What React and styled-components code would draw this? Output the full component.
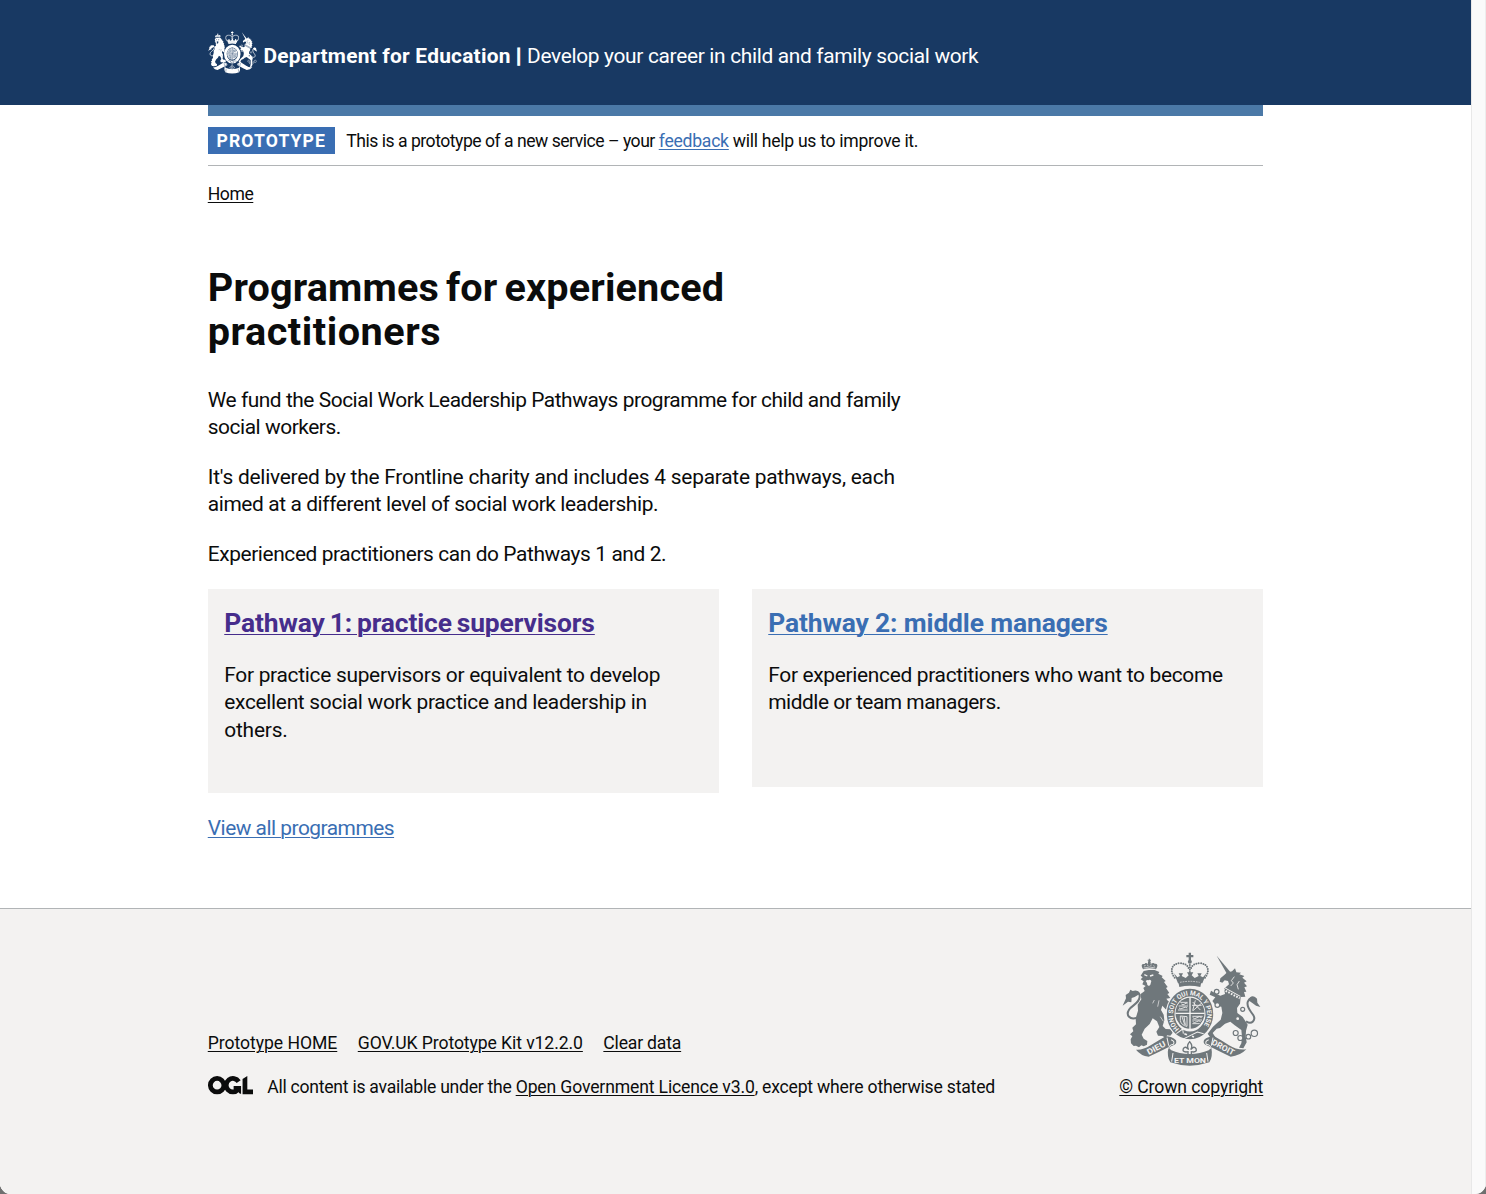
import React from "react";
import styled, { createGlobalStyle } from "styled-components";

const GlobalStyle = createGlobalStyle`
  * { box-sizing: border-box; }
  body {
    margin: 0;
    background: #6f6f6f;
    color: #0b0c0c;
    font-family: Roboto, "Liberation Sans", sans-serif;
    font-size: 20.9px;
    line-height: 27.5px;
  }
`;

const Window = styled.div`
  display: flex;
  height: 1194px;
  overflow: hidden;
  border-radius: 0 0 11px 11px;
  background: #fafafa;
`;

const Page = styled.div`
  display: flex;
  flex-direction: column;
  width: 1471px;
  background: #fff;
`;

const ScrollTrack = styled.div`
  flex: 1;
  border-left: 1px solid #e8e8e8;
  border-right: 1px solid #ededed;
  background: #fafafa;
`;

const Container = styled.div`
  width: 1055.5px;
  margin: 0 auto;
`;

const Header = styled.header`
  height: 104.5px;
  background: #183963;
  color: #fff;
`;

const HeaderRow = styled(Container)`
  display: flex;
  align-items: center;
  padding-top: 31px;
`;

const HeaderText = styled.span`
  margin: 9px 0 0 ${(p) => p.$gap}px;
  font-weight: ${(p) => (p.$bold ? 700 : 400)};
  letter-spacing: ${(p) => p.$track}px;
  white-space: nowrap;
`;

const Divider = styled.span`
  -webkit-text-stroke: 1px #fff;
`;

const HeaderRule = styled(Container)`
  height: 11px;
  background: #4b79a7;
`;

const PhaseBanner = styled(Container)`
  display: flex;
  align-items: center;
  height: 50.5px;
  border-bottom: 1px solid #b1b4b6;
  font-size: 17.6px;
  line-height: 22px;
`;

const PhaseText = styled.div`
  display: flex;
  padding-top: 1px;
`;

const Tag = styled.strong`
  width: 127px;
  height: 27.5px;
  margin-right: 11.5px;
  padding: 3.5px 0 0 8.8px;
  background: #3a6eb3;
  color: #fff;
  letter-spacing: 1.1px;
`;

const Small = styled.span`
  font-size: 17.6px;
  line-height: 22px;
  letter-spacing: ${(p) => p.$track || 0}px;
  white-space: pre;
`;

const Link = styled.a`
  color: ${(p) => p.$color || "#0b0c0c"};
  letter-spacing: ${(p) => p.$track || 0}px;
  word-spacing: ${(p) => p.$words || 0}px;
  text-decoration: underline;
  text-decoration-thickness: 1px;
  text-underline-offset: 2.2px;
  white-space: nowrap;
`;

const Breadcrumbs = styled(Container)`
  padding-top: 16.5px;
  font-size: 17.6px;
  line-height: 22px;
`;

const Main = styled.main`
  width: 1055.5px;
  margin: 0 auto;
  padding-top: 61px;
`;

const Title = styled.h1`
  margin: 0 0 33px;
  font-size: 39.6px;
  line-height: 44px;
  word-spacing: -3px;
`;

const Paragraph = styled.p`
  margin: 0 0 22px;
`;

const Line = styled.span`
  display: block;
  letter-spacing: ${(p) => p.$track}px;
  white-space: nowrap;
`;

const CardRow = styled.div`
  display: flex;
  align-items: flex-start;
  justify-content: space-between;
  margin-top: -0.8px;
`;

const Card = styled.section`
  width: 511.5px;
  height: ${(p) => p.$height}px;
  padding: 17.3px 16.5px 16.5px;
  background: #f3f2f1;
`;

const CardTitle = styled.h2`
  margin: 0 0 22px;
  font-size: 26.4px;
  line-height: 33px;
`;

const MoreLink = styled.div`
  margin-top: 22.4px;
`;

const Footer = styled.footer`
  flex: 1;
  margin-top: 65.3px;
  border-top: 1px solid #b1b4b6;
  background: #f3f2f1;
  font-size: 17.6px;
  line-height: 22px;
`;

const FooterRow = styled(Container)`
  display: flex;
  align-items: flex-end;
  justify-content: space-between;
  padding-top: 43px;
`;

const FooterLinks = styled.div`
  display: flex;
  gap: 20.5px;
  margin-bottom: 22px;
`;

const Licence = styled.div`
  display: flex;
`;

const LogoSlot = styled.div`
  display: flex;
  align-items: flex-start;
  width: 59.5px;
`;

const Copyright = styled.div`
  display: flex;
  flex-direction: column;
  align-items: flex-end;
  gap: 10.5px;
`;

const CrestSlot = styled.div`
  display: flex;
  margin-right: 2.5px;
`;

const BLUE = "#3a6eb3";
const PURPLE = "#462d8c";

function Ogl() {
  return (
    <svg width="45" height="18.5" viewBox="0 0 483 196" fill="none" stroke="#0b0c0c" strokeWidth="51" role="img" aria-label="Open Government Licence">
      <circle cx="97.8" cy="97.8" r="72.4" />
      <path d="M329 59A72.4 72.4 0 1 0 322 146M275 131H330" strokeWidth="51" />
      <path d="M304 106H355V193L332 180Z" fill="#0b0c0c" stroke="none" />
      <path d="M371 32L422 0V143H483V194H371Z" fill="#0b0c0c" stroke="none" />
    </svg>
  );
}

function Crest({ width, height, ink, paper, motto }) {
  const quarter = { stroke: paper, strokeWidth: 2.6, fill: "none" };
  return (
    <svg width={width} height={height} viewBox="36 22 416 342" preserveAspectRatio="none" fill={ink} role="img" aria-label="Royal coat of arms">
      {/* crown */}
      <path d="M236 24h7v7h7v7h-7v8h-7v-8h-7v-7h7z" />
      <circle cx="239.500" cy="51" r="6" />
      <g fill="none" stroke={ink} strokeWidth="6" strokeLinecap="round" strokeDasharray="0 7">
        <path d="M194 99C176 76 188 55 210 56 226 56 236 64 237 76" />
        <path d="M285 99C303 76 291 55 269 56 253 56 243 64 242 76" />
        <path d="M239.500 61V88" />
      </g>
      <path d="M192 86l10 12 8-4-4-8h13l-4 8 12 6 9-8-5-9h19l-5 9 9 8 12-6-4-8h13l-4 8 8 4 10-12-12 30H204z" />
      <path d="M205 112Q239 102 274 112L271 127Q239 119 208 127Z" />
      <path d="M210 113Q239 107 269 113" stroke={paper} strokeWidth="2" strokeDasharray="5 3" fill="none" />

      {/* lion */}
      <path d="M99 74Q89 56 104 58 106 52 114 58 112 50 118 47 124 50 122 58 130 52 134 57 148 56 138 74 118 68 99 74Z" />
      <path d="M113 47h10M118 42v10" stroke={ink} strokeWidth="3" />
      <path d="M102 64l5-2M111 61l4 2M121 62l4-1M130 63l4 2M101 70Q119 64 136 70" stroke={paper} strokeWidth="2" fill="none" />
      <path d="M101 79L116 76 134 76 148 82 145 87 158 94 155 98 167 109 162 112 173 127 168 130 178 145 172 148 181 160 169 162 174 169 188 175 176 181 188 190 175 189 183 199 167 194 157 183 153 196 161 210 163 227 158 244 167 253 182 254 188 264 181 273 171 272 168 280 157 274 144 273 139 261 148 247 141 230 128 221 119 238 104 252 95 270 101 282 112 289 111 300 101 305 94 302 87 308 78 303 71 304 63 296 62 284 67 275 60 269 70 260 67 249 78 239 77 221 84 198 83 180 94 164 91 149 104 139 100 130 107 124 97 119 101 110 92 104 98 98 92 93Z" />
      <path d="M103 90l9 4M120 94l10-3" stroke={paper} strokeWidth="4" fill="none" />
      <path d="M107 109q6-5 8-2 5-4 9 2l-3 11-4 4-5-3-1-6z" fill={paper} />
      <path d="M82 219C59 228 47 211 57 195 66 181 91 175 89 153 87 140 77 140 72 146" stroke={ink} strokeWidth="6" fill="none" />
      <path d="M90 147Q82 133 68 139L61 135 57 144 47 151 48 161 38 183 54 171 64 173 65 160 74 157Z" />
      <path d="M147 167l-4 19M133 166l-5 10M151 216l9 14" stroke={paper} strokeWidth="2" />

      {/* unicorn */}
      <path d="M320 33L361 82 351 88Z" />
      <path d="M331 101L342 92 350 84 366 80 375 71 379 83 393 84 388 89 403 94 397 99 410 110 402 114 411 125 403 128 409 141 402 142 406 156 392 157 390 177 381 190 382 205 398 217 413 240 408 258 407 276 410 293 400 311 387 309 394 296 396 278 394 256 374 242 361 231 345 237 330 250 320 252 308 265 317 279 304 283 293 267 309 246 332 225 337 205 334 186 318 183 307 169 316 158 299 150 303 138 313 144 331 153 345 148 342 132 357 119 354 109 344 107 337 114 329 111Z" />
      <path d="M373 96l-9 12 6 7-8 9M388 109l-7 11 4 14" stroke={paper} strokeWidth="2.500" fill="none" />
      <path d="M342 128L391 155" stroke={paper} strokeWidth="3" fill="none" />
      <path d="M339 134L389 161" stroke={paper} strokeWidth="6" strokeDasharray="5 4" fill="none" />
      <path d="M408 230C426 242 438 225 430 212 422 199 409 189 413 172 418 158 432 156 437 170" stroke={ink} strokeWidth="6" fill="none" />
      <path d="M414 166Q423 149 435 157L441 162 442 174 451 187 438 183 428 176Z" />
      <g fill={paper} stroke={ink} strokeWidth="3.500">
        <circle cx="320" cy="141" r="7" /><circle cx="322" cy="181" r="7" />
        <circle cx="398" cy="194" r="6" /><circle cx="383" cy="222" r="6" />
        <circle cx="377" cy="265" r="7.500" /><circle cx="391" cy="280" r="7.500" />
        <circle cx="415" cy="276" r="7" /><circle cx="433" cy="266" r="9.500" />
      </g>

      {/* garter and shield */}
      <ellipse cx="240" cy="208" rx="73" ry="79" fill={paper} />
      <ellipse cx="240" cy="208" rx="58" ry="64" fill="none" stroke={ink} strokeWidth="23" />
      <ellipse cx="240" cy="206" rx="43.500" ry="46.500" />
      <path d="M240 158V254M196 206H284" stroke={paper} strokeWidth="4" />
      <g {...quarter}>
        <path d="M206 184h28M204 196h29M211 173h22M214 178q5 5 10 0t9 0M207 190q5 5 12 0t13 0" />
        <path d="M248 172l23 24M274 176l-25 22M246 182h29M256 167l-8 31" />
        <path d="M211 214v14q3 14 20 17V216zM216 216l8 24M222 216l4 25" />
        <path d="M247 215h31M247 226h29M247 237h22M248 219q6 6 13 0t14 0M248 231q5 5 12 0t12 0" />
      </g>
      {motto && (
        <g fill={paper} fontFamily="Roboto, sans-serif" fontWeight="700">
          <path id="garter" d="M208 253A51 57 0 1 1 272 253" fill="none" />
          <text fontSize="20"><textPath href="#garter" textLength="254" lengthAdjust="spacingAndGlyphs">HONI SOIT QUI MAL Y PENSE</textPath></text>
        </g>
      )}
      <path d="M199 267L218 253 220 267M281 267L262 262 216 285" stroke={paper} strokeWidth="3" fill="none" />
      <path d="M223 267l8 3M246 275l6 2" stroke={paper} strokeWidth="5" />

      {/* ribbons */}
      <path d="M78 315Q98 317 122 302 148 286 167 275 186 275 198 287 202 300 187 303 173 307 184 317 207 328 239 328 271 328 296 317 307 307 293 303 277 299 282 286 293 275 313 275 334 287 357 302 380 317 409 314 390 334 362 336 337 325 304 308 309 338 298 353 268 363 239 363 209 363 181 353 170 338 175 308 146 323 116 336 92 333 78 315Z" />
      <path d="M171 279L176 303M183 285q13 5 7 14-16 3-13 14M309 279L304 303M296 285q-13 5-7 14 16 3 13 14M189 325L185 351M290 325L294 351" stroke={paper} strokeWidth="3" fill="none" />
      {motto && (
        <g fill={paper} fontFamily="Roboto, sans-serif" fontWeight="700" fontSize="24">
          <text transform="translate(116 331) rotate(-28)" textLength="60" lengthAdjust="spacingAndGlyphs">DIEU</text>
          <text x="192" y="355" textLength="96" lengthAdjust="spacingAndGlyphs">ET MON</text>
          <text transform="translate(303 298) rotate(28)" textLength="74" lengthAdjust="spacingAndGlyphs">DROIT</text>
        </g>
      )}
      <path d="M239 291q11 13 3 24 10-13 16-3 4 9-8 10l-6-1v9h-10v-9l-6 1q-12-1-8-10 6-10 16 3-8-11 3-24z" fill={paper} stroke={ink} strokeWidth="4" />
    </svg>
  );
}

const TextLines = ({ lines }) => lines.map(([text, track]) => <Line key={text} $track={track}>{text}</Line>);

export default function App() {
  return (
    <Window>
      <GlobalStyle />
      <Page>
        <Header>
          <HeaderRow>
            <Crest width={49.5} height={42.5} ink="#fff" paper="#183963" />
            <HeaderText $gap={6.2} $bold $track={0.23}>Department for Education <Divider>|</Divider></HeaderText>
            <HeaderText $gap={5.5} $track={-0.32}>Develop your career in child and family social work</HeaderText>
          </HeaderRow>
        </Header>
        <HeaderRule />
        <PhaseBanner>
          <Tag>PROTOTYPE</Tag>
          <PhaseText>
            <Small $track={-0.49}>This is a prototype of a new service – your </Small>
            <Link href="#" $color={BLUE} $track={-0.25}>feedback</Link>
            <Small $track={-0.29}> will help us to improve it.</Small>
          </PhaseText>
        </PhaseBanner>
        <Breadcrumbs><Link href="#" $track={-0.45}>Home</Link></Breadcrumbs>
        <Main>
          <Title><TextLines lines={[["Programmes for experienced", 0.16], ["practitioners", 0.53]]} /></Title>
          <Paragraph>
            <TextLines lines={[["We fund the Social Work Leadership Pathways programme for child and family", -0.45], ["social workers.", -0.45]]} />
          </Paragraph>
          <Paragraph>
            <TextLines lines={[["It's delivered by the Frontline charity and includes 4 separate pathways, each", -0.23], ["aimed at a different level of social work leadership.", -0.39]]} />
          </Paragraph>
          <Paragraph><TextLines lines={[["Experienced practitioners can do Pathways 1 and 2.", -0.4]]} /></Paragraph>
          <CardRow>
            <Card $height={203.5}>
              <CardTitle><Link href="#" $color={PURPLE} $track={-0.12} $words={-1.5}>Pathway 1: practice supervisors</Link></CardTitle>
              <Paragraph>
                <TextLines lines={[["For practice supervisors or equivalent to develop", -0.28], ["excellent social work practice and leadership in", -0.3], ["others.", -0.2]]} />
              </Paragraph>
            </Card>
            <Card $height={198}>
              <CardTitle><Link href="#" $color={BLUE} $track={-0.13}>Pathway 2: middle managers</Link></CardTitle>
              <Paragraph>
                <TextLines lines={[["For experienced practitioners who want to become", -0.31], ["middle or team managers.", -0.48]]} />
              </Paragraph>
            </Card>
          </CardRow>
          <MoreLink><Link href="#" $color={BLUE} $track={-0.5}>View all programmes</Link></MoreLink>
        </Main>
        <Footer>
          <FooterRow>
            <div>
              <FooterLinks>
                <Link href="#" $track={-0.05}>Prototype HOME</Link>
                <Link href="#" $track={-0.09}>GOV.UK Prototype Kit v12.2.0</Link>
                <Link href="#" $track={-0.2}>Clear data</Link>
              </FooterLinks>
              <Licence>
                <LogoSlot><Ogl /></LogoSlot>
                <Small $track={-0.26}>All content is available under the </Small>
                <Link href="#" $track={-0.15}>Open Government Licence v3.0</Link>
                <Small $track={-0.2}>, except where otherwise stated</Small>
              </Licence>
            </div>
            <Copyright>
              <CrestSlot><Crest width={138.7} height={114} ink="#6f777b" paper="#f3f2f1" motto /></CrestSlot>
              <Link href="#" $track={-0.1}>© Crown copyright</Link>
            </Copyright>
          </FooterRow>
        </Footer>
      </Page>
      <ScrollTrack />
    </Window>
  );
}
